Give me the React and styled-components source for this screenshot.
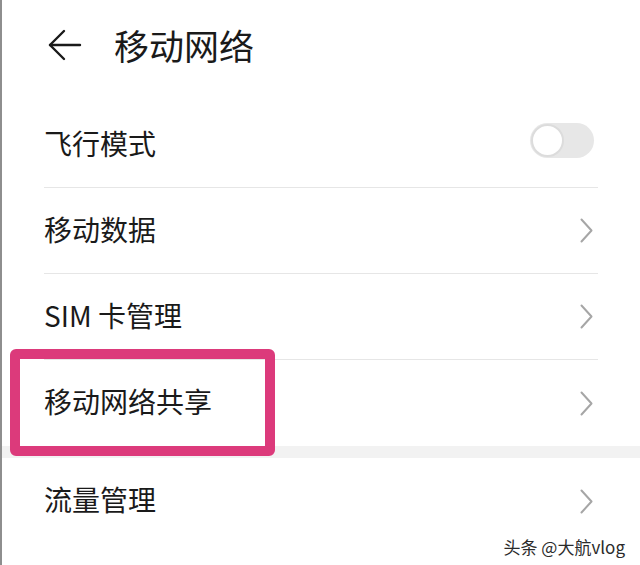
import React from 'react'
import styled, { createGlobalStyle } from 'styled-components';

const GlobalStyle = createGlobalStyle`
  html, body {
    margin: 0;
    padding: 0;
    background: #ffffff;
  }
  body {
    font-family: "Noto Sans CJK SC", "Noto Sans", sans-serif;
  }
`;

const Page = styled.div`
  position: relative;
  width: 640px;
  height: 565px;
  box-sizing: border-box;
  border-left: 2px solid #8e8e8e;
  background: #ffffff;
  overflow: hidden;
`;

const Header = styled.header`
  height: 102px;
  box-sizing: border-box;
  padding: 0 0 13px 46px;
  display: flex;
  align-items: center;
  gap: 32px;
`;

const Title = styled.h1`
  margin: 0;
  font-size: 35px;
  font-weight: 400;
  line-height: 1;
  color: #1a1a1a;
`;

const Section = styled.div`
  padding-left: 42px;
  margin-right: 42px;
`;

const Row = styled.div`
  position: relative;
  height: 86px;
  box-sizing: border-box;
  display: flex;
  align-items: center;
  justify-content: space-between;
  padding-right: ${p => (p.$toggle ? '4px' : '5px')};
  border-bottom: ${p => (p.$last ? 'none' : '1px solid #e6e6e6')};
`;

const Label = styled.span`
  font-size: 28px;
  line-height: 1;
  color: #1a1a1a;
  margin-top: -4px;
`;

const Band = styled.div`
  height: 12px;
  background: #f2f2f2;
`;

const Track = styled.div`
  width: 64px;
  height: 35px;
  border-radius: 18px;
  background: #e7e7e7;
  display: flex;
  align-items: center;
  padding-left: 1px;
  box-sizing: border-box;
  margin-top: -8px;
`;

const Knob = styled.div`
  width: 33px;
  height: 33px;
  border-radius: 50%;
  background: #ffffff;
  box-sizing: border-box;
  border: 2px solid #dcdcdc;
`;

const Highlight = styled.div`
  position: absolute;
  left: -34px;
  top: -11px;
  width: 265px;
  height: 107px;
  box-sizing: border-box;
  border: 10px solid #dc3a7b;
  border-radius: 6px;
  pointer-events: none;
`;

const Watermark = styled.div`
  position: absolute;
  right: 15px;
  bottom: 10px;
  font-size: 17px;
  line-height: 1;
  color: #2b2b2b;
  text-shadow: 0 0 2px #ffffff, 0 0 2px #ffffff;
`;

const BackArrow = () => (
  <svg width="34" height="32" viewBox="0 0 34 32" fill="none" stroke="#1a1a1a" strokeWidth="2.4" strokeLinecap="round" strokeLinejoin="round">
    <line x1="2" y1="16" x2="32" y2="16" />
    <polyline points="16,2 2,16 16,30" />
  </svg>
);

const Chevron = () => (
  <svg width="13" height="25" viewBox="0 0 13 25" fill="none" stroke="#a6a6a6" strokeWidth="2" strokeLinecap="round" strokeLinejoin="round">
    <polyline points="1.5,1.5 11.5,12.5 1.5,23.5" />
  </svg>
);

const App = () => {
  return (
    <Page>
      <GlobalStyle />
      <Header>
        <BackArrow />
        <Title>移动网络</Title>
      </Header>

      <Section>
        <Row $toggle>
          <Label>飞行模式</Label>
          <Track>
            <Knob />
          </Track>
        </Row>
        <Row>
          <Label>移动数据</Label>
          <Chevron />
        </Row>
        <Row>
          <Label>SIM 卡管理</Label>
          <Chevron />
        </Row>
        <Row $last>
          <Label>移动网络共享</Label>
          <Chevron />
          <Highlight />
        </Row>
      </Section>

      <Band />

      <Section>
        <Row $last>
          <Label>流量管理</Label>
          <Chevron />
        </Row>
      </Section>

      <Watermark>头条 @大航vlog</Watermark>
    </Page>
  )
}

export default App
